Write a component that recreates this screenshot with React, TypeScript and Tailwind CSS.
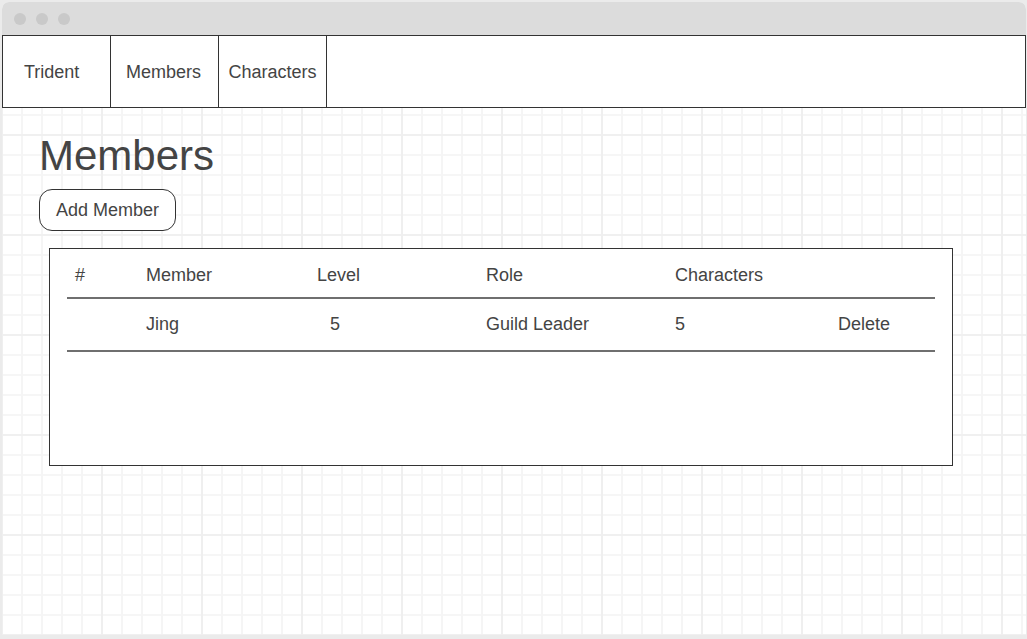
import React from "react";

const cols = "grid grid-cols-[79px_171px_169px_189px_163px_1fr]";

export default function App() {
  return (
    <div
      className="w-[1027px] h-[639px] bg-[#ebebeb] pt-[2px] pl-[2px] overflow-hidden text-[#444] [font-family:'Liberation_Sans',Arial,sans-serif]"
    >
      <div className="w-[1024px] h-[633px] flex flex-col bg-white rounded-t-[7px] overflow-hidden">
        {/* title bar */}
        <div className="h-[33px] shrink-0 bg-[#dcdcdc] flex items-center gap-[10px] pl-[12px]">
          <span className="w-[12px] h-[12px] rounded-full bg-[#c9c9c9]" />
          <span className="w-[12px] h-[12px] rounded-full bg-[#c9c9c9]" />
          <span className="w-[12px] h-[12px] rounded-full bg-[#c9c9c9]" />
        </div>
        {/* nav */}
        <nav className="h-[73px] shrink-0 border border-[#333] flex text-[18px] pt-[2px]">
          <div className="w-[108px] border-r border-[#333] -mt-[2px] pt-[2px] flex items-center pl-[21px]">Trident</div>
          <div className="w-[108px] border-r border-[#333] -mt-[2px] pt-[2px] flex items-center justify-center pr-[2px]">Members</div>
          <div className="w-[108px] border-r border-[#333] -mt-[2px] pt-[2px] flex items-center justify-center">Characters</div>
        </nav>
        {/* content */}
        <main
          className="flex-1 pl-[37px] pt-[27px] bg-white bg-[linear-gradient(to_right,#efefef_2px,transparent_2px),linear-gradient(to_bottom,#f0f0f0_2px,transparent_2px),linear-gradient(to_right,#f5f5f5_2px,transparent_2px),linear-gradient(to_bottom,#f6f6f6_2px,transparent_2px)] bg-[size:100px_100px,100px_100px,20px_20px,20px_20px] bg-[position:-1px_-74px,-1px_-74px,-1px_6px,-1px_6px]"
        >
          <h1 className="text-[42px] leading-[42px] h-[42px]">Members</h1>
          <button className="mt-[12px] h-[42px] px-[16px] border border-[#333] rounded-[13px] bg-white text-[18px] text-[#444]">
            Add Member
          </button>
          <div className="mt-[17px] ml-[10px] w-[904px] h-[218px] border border-[#333] bg-white px-[17px] text-[18px]">
            <div className={`${cols} h-[50px] pt-[4px] items-center border-b-2 border-[#6f6f6f]`}>
              <div className="pl-[8px]">#</div>
              <div>Member</div>
              <div>Level</div>
              <div>Role</div>
              <div>Characters</div>
              <div></div>
            </div>
            <div className={`${cols} h-[53px] items-center border-b-2 border-[#6f6f6f]`}>
              <div></div>
              <div>Jing</div>
              <div className="pl-[13px]">5</div>
              <div>Guild Leader</div>
              <div>5</div>
              <div>Delete</div>
            </div>
          </div>
        </main>
      </div>
    </div>
  );
}
